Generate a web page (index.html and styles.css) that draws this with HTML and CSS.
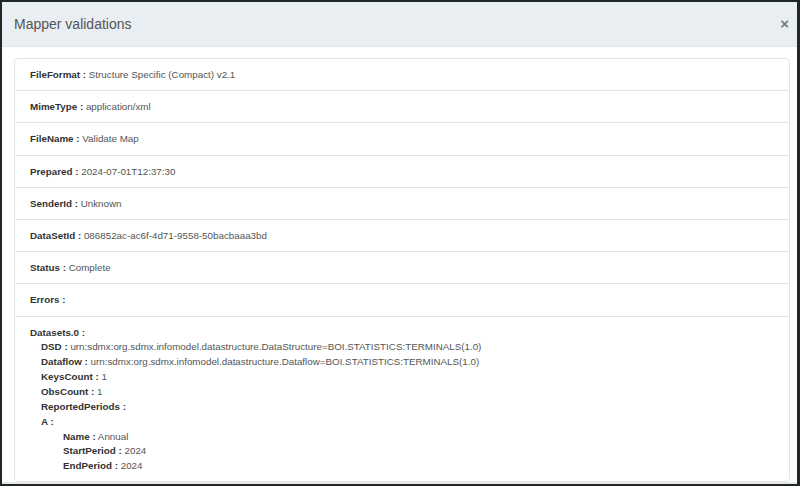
FILE: index.html
```html
<!DOCTYPE html>
<html>
<head>
<meta charset="utf-8">
<link rel="stylesheet" href="styles.css">
</head>
<body>
<div class="frame">
  <div class="header">
    <h4 class="title">Mapper validations</h4>
    <span class="close">&times;</span>
  </div>
  <div class="body">
    <div class="list">
      <div class="item"><b>FileFormat :</b> Structure Specific (Compact) v2.1</div>
      <div class="item"><b>MimeType :</b> application/xml</div>
      <div class="item"><b>FileName :</b> Validate Map</div>
      <div class="item"><b>Prepared :</b> 2024-07-01T12:37:30</div>
      <div class="item"><b>SenderId :</b> Unknown</div>
      <div class="item"><b>DataSetId :</b> 086852ac-ac6f-4d71-9558-50bacbaaa3bd</div>
      <div class="item"><b>Status :</b> Complete</div>
      <div class="item"><b>Errors :</b></div>
      <div class="item nested">
        <div class="line"><b>Datasets.0 :</b></div>
        <div class="indent">
          <div class="line"><b>DSD :</b> urn:sdmx:org.sdmx.infomodel.datastructure.DataStructure=BOI.STATISTICS:TERMINALS(1.0)</div>
          <div class="line"><b>Dataflow :</b> urn:sdmx:org.sdmx.infomodel.datastructure.Dataflow=BOI.STATISTICS:TERMINALS(1.0)</div>
          <div class="line"><b>KeysCount :</b> 1</div>
          <div class="line"><b>ObsCount :</b> 1</div>
          <div class="line"><b>ReportedPeriods :</b></div>
          <div class="line"><b>A :</b></div>
          <div class="indent2">
            <div class="line"><b>Name :</b> Annual</div>
            <div class="line"><b>StartPeriod :</b> 2024</div>
            <div class="line"><b>EndPeriod :</b> 2024</div>
          </div>
        </div>
      </div>
    </div>
  </div>
</div>
</body>
</html>
```

FILE: styles.css
```css
html, body {
  margin: 0;
  padding: 0;
  background: #fff;
}
body {
  font-family: "Liberation Sans", Arial, sans-serif;
  font-size: 9.8px;
  color: #555;
}
.frame {
  width: 800px;
  height: 486px;
  box-sizing: border-box;
  border: 2px solid #1f2727;
  border-right-width: 3px;
  overflow: hidden;
  display: flex;
  flex-direction: column;
  position: relative;
}
.header {
  height: 44px;
  flex: none;
  background: #e9eef2;
  border-bottom: 1px solid #e3e7eb;
  display: flex;
  align-items: center;
  justify-content: space-between;
  padding: 0 8px 0 12px;
}
.title {
  margin: 0;
  font-size: 14px;
  font-weight: normal;
  color: #555;
}
.close {
  font-size: 15px;
  font-weight: bold;
  color: #777;
  line-height: 1;
  margin-top: -2px;
}
.body {
  flex: 1;
  padding: 11px 7px 0 12px;
  overflow: hidden;
  border-bottom: 2px solid #e8e8e8;
}
.list {
  border: 1px solid #e3e3e3;
  border-radius: 4px;
}
.item {
  padding: 7px 15px;
  line-height: 17.2px;
  border-top: 1px solid #e3e3e3;
}
.item:first-child {
  border-top: none;
}
.item b {
  color: #333;
}
.nested {
  padding-top: 9px;
}
.line {
  line-height: 14.85px;
}
.indent {
  padding-left: 11px;
}
.indent2 {
  padding-left: 22px;
}
```
